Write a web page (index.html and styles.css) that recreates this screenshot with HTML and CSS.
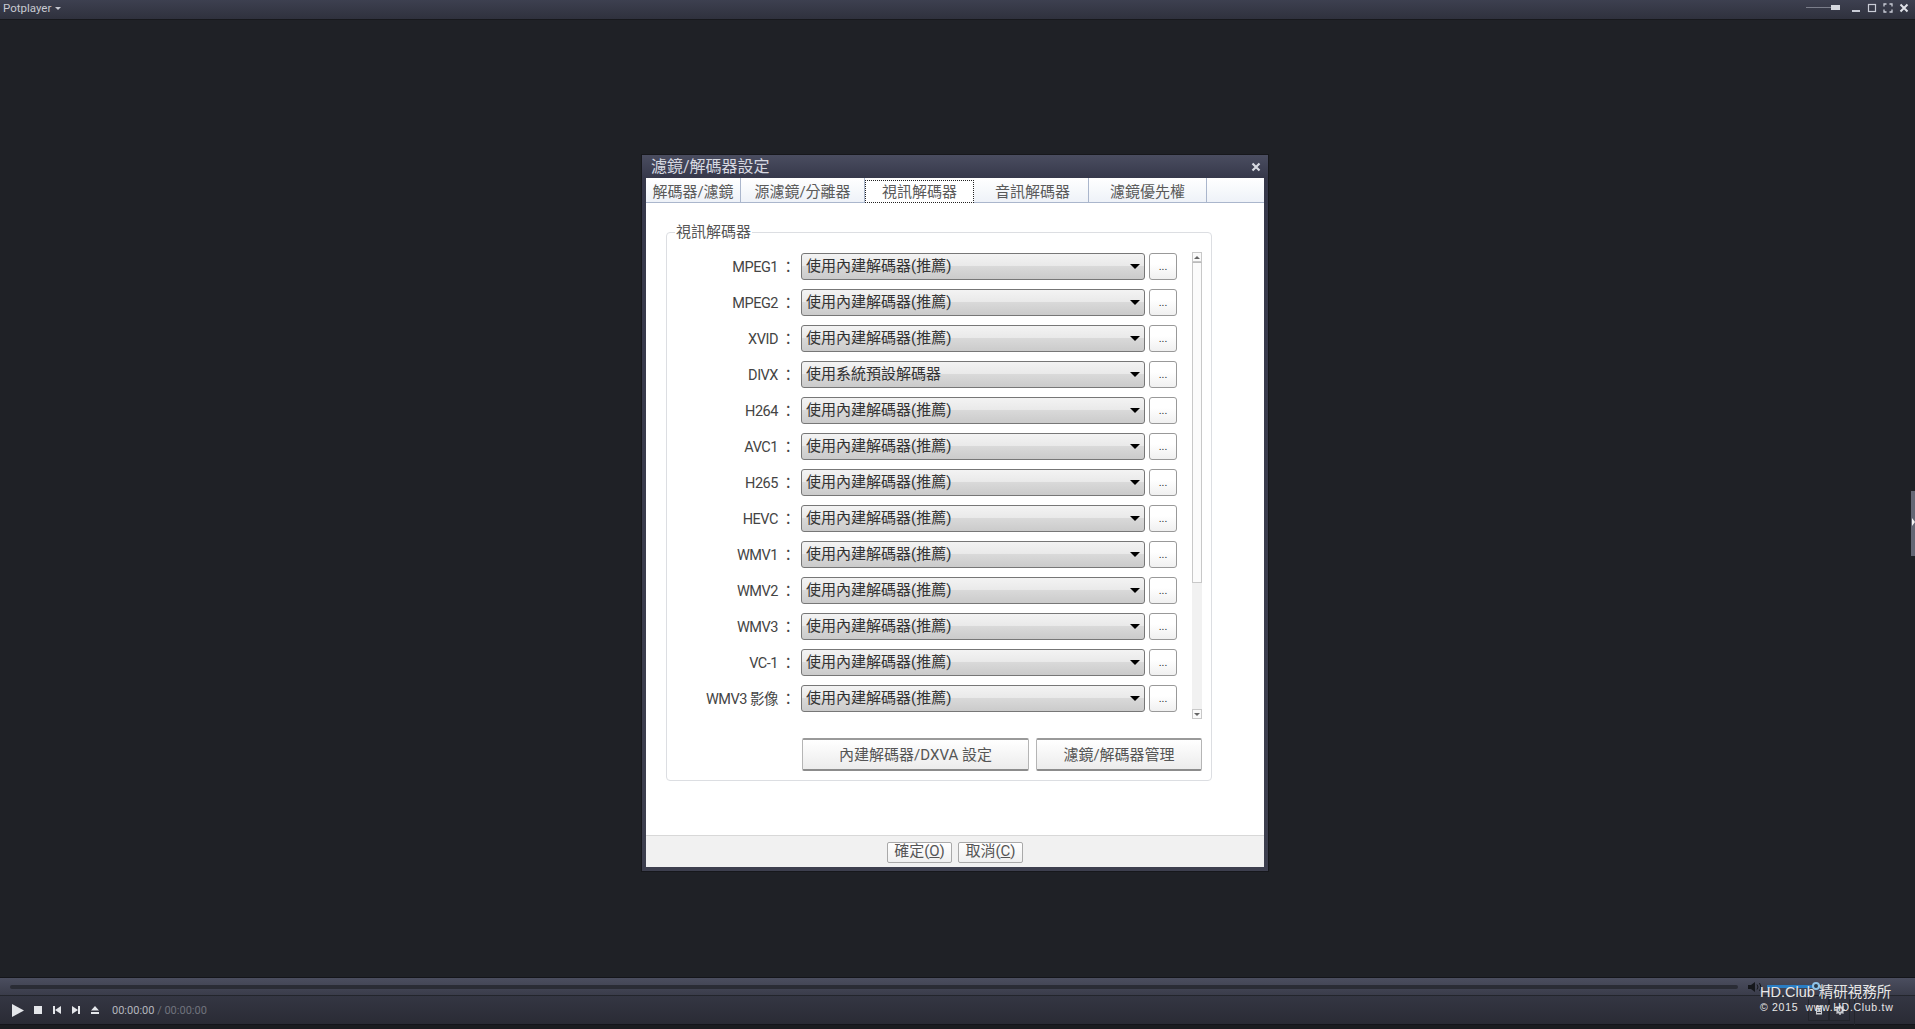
FILE: index.html
```html
<!DOCTYPE html>
<html lang="zh-Hant">
<head>
  <meta charset="UTF-8">
  <title>Potplayer</title>
  <link rel="stylesheet" href="styles.css">
</head>
<body>

<header class="topbar">
  <div class="app-menu">Potplayer <span class="caret"></span></div>
  <div class="win-controls">
    <div class="opacity-slider"><span class="opacity-line"></span><span class="opacity-thumb"></span></div>
    <svg class="win-icon" viewBox="0 0 10 10"><rect x="1" y="7" width="8" height="2" fill="#c9ccd6"/></svg>
    <svg class="win-icon" viewBox="0 0 10 10"><rect x="1.5" y="1.5" width="7" height="7" fill="none" stroke="#c9ccd6" stroke-width="1.2"/></svg>
    <svg class="win-icon" viewBox="0 0 10 10"><path d="M1 3.5V1h2.5M6.500 1H9v2.500M9 6.500V9H6.500M3.500 9H1V6.500" fill="none" stroke="#c9ccd6" stroke-width="1.300"/></svg>
    <svg class="win-icon" viewBox="0 0 10 10"><path d="M1.500 1.500l7 7M8.500 1.500l-7 7" stroke="#dfe1e8" stroke-width="2"/></svg>
  </div>
</header>

<main class="stage">
  <section class="dialog">
    <div class="dialog-title">
      <span>濾鏡/解碼器設定</span>
      <svg class="dialog-close" viewBox="0 0 10 10"><path d="M1.500 1.500l7 7M8.500 1.500l-7 7" stroke="#d8dae2" stroke-width="2.200"/></svg>
    </div>
    <div class="dialog-client">
      <nav class="tabs">
        <div class="tab tab-1">解碼器/濾鏡</div>
        <div class="tab tab-2">源濾鏡/分離器</div>
        <div class="tab tab-3 active">視訊解碼器</div>
        <div class="tab tab-4">音訊解碼器</div>
        <div class="tab tab-5">濾鏡優先權</div>
      </nav>

      <div class="dialog-body">
        <div class="group">
          <div class="group-title">視訊解碼器</div>
          <div class="codec-area">
            <div class="codec-list">
              <div class="codec-row"><label>MPEG1 ：</label><div class="combo">使用內建解碼器(推薦)</div><button class="more">...</button></div>
              <div class="codec-row"><label>MPEG2 ：</label><div class="combo">使用內建解碼器(推薦)</div><button class="more">...</button></div>
              <div class="codec-row"><label>XVID ：</label><div class="combo">使用內建解碼器(推薦)</div><button class="more">...</button></div>
              <div class="codec-row"><label>DIVX ：</label><div class="combo">使用系統預設解碼器</div><button class="more">...</button></div>
              <div class="codec-row"><label>H264 ：</label><div class="combo">使用內建解碼器(推薦)</div><button class="more">...</button></div>
              <div class="codec-row"><label>AVC1 ：</label><div class="combo">使用內建解碼器(推薦)</div><button class="more">...</button></div>
              <div class="codec-row"><label>H265 ：</label><div class="combo">使用內建解碼器(推薦)</div><button class="more">...</button></div>
              <div class="codec-row"><label>HEVC ：</label><div class="combo">使用內建解碼器(推薦)</div><button class="more">...</button></div>
              <div class="codec-row"><label>WMV1 ：</label><div class="combo">使用內建解碼器(推薦)</div><button class="more">...</button></div>
              <div class="codec-row"><label>WMV2 ：</label><div class="combo">使用內建解碼器(推薦)</div><button class="more">...</button></div>
              <div class="codec-row"><label>WMV3 ：</label><div class="combo">使用內建解碼器(推薦)</div><button class="more">...</button></div>
              <div class="codec-row"><label>VC-1 ：</label><div class="combo">使用內建解碼器(推薦)</div><button class="more">...</button></div>
              <div class="codec-row"><label>WMV3 影像 ：</label><div class="combo">使用內建解碼器(推薦)</div><button class="more">...</button></div>
            </div>
            <div class="scrollbar">
              <div class="scroll-btn"><span class="tri-up"></span></div>
              <div class="scroll-thumb"></div>
              <div class="scroll-track"></div>
              <div class="scroll-btn"><span class="tri-down"></span></div>
            </div>
          </div>
          <div class="group-actions">
            <button class="action action-wide">內建解碼器/DXVA 設定</button>
            <button class="action action-narrow">濾鏡/解碼器管理</button>
          </div>
        </div>
      </div>

      <footer class="dialog-footer">
        <button class="foot-btn">確定(<u>O</u>)</button>
        <button class="foot-btn">取消(<u>C</u>)</button>
      </footer>
    </div>
  </section>
  <div class="side-handle"><span class="side-arrow"></span></div>
</main>

<footer class="playbar">
  <div class="seek-row">
    <div class="seek-track"></div>
    <div class="volume">
      <svg class="speaker" viewBox="0 0 16 12"><path d="M1 4h3l4-3v10L4 8H1z" fill="#15171b"/><path d="M10 3.500q2 2.500 0 5M12.500 2q3 4 0 8" fill="none" stroke="#15171b"/></svg>
      <div class="volume-level"><span class="volume-knob"></span></div>
    </div>
  </div>
  <div class="control-row">
    <svg class="ctl ctl-play" viewBox="0 0 12 13"><path d="M0 0l12 6.500L0 13z" fill="#e4e6ea"/></svg>
    <svg class="ctl" viewBox="0 0 8 8"><rect width="8" height="8" fill="#e4e6ea"/></svg>
    <svg class="ctl" viewBox="0 0 8 8"><path d="M0 0h2v8H0zM8 0v8L2 4z" fill="#e4e6ea"/></svg>
    <svg class="ctl" viewBox="0 0 8 8"><path d="M8 0H6v8h2zM0 0v8l6-4z" fill="#e4e6ea"/></svg>
    <svg class="ctl" viewBox="0 0 8 8"><path d="M4 0l4 4.500H0zM0 6h8v2H0z" fill="#e4e6ea"/></svg>
    <div class="time"><span class="time-now">00:00:00</span> / 00:00:00</div>
    <div class="side-tools">
      <div class="tool-btn">
        <svg viewBox="0 0 10 10"><path d="M1.500 0h7v10h-7zM3 2.500h4M3 5h4M3 7.500h4" fill="#c7c9cf" stroke="#33353f" stroke-width="1"/></svg>
      </div>
      <div class="tool-btn">
        <svg viewBox="0 0 10 10"><circle cx="5" cy="5" r="2.800" fill="none" stroke="#c7c9cf" stroke-width="2"/><path d="M5 0v2M5 8v2M0 5h2M8 5h2M1.500 1.500l1.300 1.300M7.200 7.200l1.300 1.300M8.500 1.500L7.200 2.800M2.800 7.200L1.500 8.500" stroke="#c7c9cf" stroke-width="1.400"/></svg>
      </div>
    </div>
    <div class="tv-panel"></div>
  </div>
  <div class="bottom-edge"></div>
</footer>

<div class="watermark">
  <div class="wm-line1">HD.Club 精研視務所</div>
  <div class="wm-line2">© 2015&nbsp; www.HD.Club.tw</div>
</div>

</body>
</html>
```

FILE: styles.css
```css
html, body {
  margin: 0;
  height: 100%;
}

body {
  width: 1915px;
  height: 1029px;
  background-color: #1f2126;
  display: flex;
  flex-direction: column;
  overflow: hidden;
  position: relative;
  font-family: Roboto, "Noto Sans CJK TC", sans-serif;
}

button {
  font-family: inherit;
  padding: 0;
  cursor: default;
}

/* top bar */
.topbar {
  height: 19px;
  background: linear-gradient(#3d4050, #2f313d);
  border-bottom: 1px solid #17181c;
  display: flex;
  justify-content: space-between;
  align-items: center;
  flex: none;
}

.app-menu {
  margin: -4px 0 0 3px;
  color: #c8cad2;
  font-size: 11.500px;
  display: flex;
  align-items: center;
  gap: 4px;
}

.caret {
  border-left: 3px solid transparent;
  border-right: 3px solid transparent;
  border-top: 3px solid #c8cad2;
  margin-top: 2px;
}

.win-controls {
  display: flex;
  align-items: center;
  gap: 6px;
  margin: -4px 6px 0 0;
}

.opacity-slider {
  display: flex;
  align-items: center;
  margin-right: 5px;
}

.opacity-line {
  width: 25px;
  height: 1px;
  background: #7b7e8b;
}

.opacity-thumb {
  width: 9px;
  height: 5px;
  background: #d5d7de;
}

.win-icon {
  width: 10px;
  height: 10px;
}

/* middle */
.stage {
  flex: 1;
  padding: 135px 0 0 642px;
  position: relative;
}

.dialog {
  width: 626px;
  height: 716px;
  box-sizing: border-box;
  padding: 0 4px 4px;
  background: linear-gradient(#4a4d60 0, #36384a 23px, #3d3f4e 100%);
  box-shadow: 0 0 0 1px #17181c;
  display: flex;
  flex-direction: column;
}

.dialog-title {
  height: 23px;
  flex: none;
  display: flex;
  justify-content: space-between;
  align-items: center;
  color: #d6d8e0;
  font-size: 16px;
  line-height: 20px;
  padding: 0 3px 0 5px;
  box-sizing: border-box;
}

.dialog-close {
  width: 10px;
  height: 10px;
}

.dialog-client {
  flex: 1;
  background: #fff;
  display: flex;
  flex-direction: column;
}

.tabs {
  height: 25px;
  box-sizing: border-box;
  flex: none;
  display: flex;
  background: linear-gradient(#fff, #eef2f8);
  border-bottom: 1px solid #aab6cc;
}

.tab {
  box-sizing: border-box;
  border-right: 1px solid #aab6cc;
  color: #5a5a5a;
  font-size: 15px;
  line-height: 28px;
  text-align: center;
}

.tab-1 { width: 95px; }
.tab-2 { width: 124px; }
.tab-4 { width: 112px; }
.tab-5 { width: 118px; }

.tab.active {
  background: #fff;
  border: 1px dotted #222;
  margin: 2px 3px 0 0;
  width: 109px;
  height: 23px;
  line-height: 23px;
}

.dialog-body {
  flex: 1;
  padding: 29px 0 0 20px;
}

.group {
  width: 546px;
  height: 549px;
  box-sizing: border-box;
  border: 1px solid #dcdee2;
  border-radius: 4px;
}

.group-title {
  width: fit-content;
  margin: -12px 0 0 8px;
  padding: 0 1px;
  background: #fff;
  color: #555;
  font-size: 15px;
  line-height: 22px;
}

.codec-area {
  display: flex;
  align-items: flex-start;
  margin-top: 10px;
}

.codec-list {
  display: flex;
  flex-direction: column;
  gap: 9px;
}

.codec-row {
  display: grid;
  grid-template-columns: 130px 344px 28px;
  column-gap: 4px;
  height: 27px;
  align-items: center;
}

.codec-row label {
  margin-right: 2px;
  color: #444;
  font-size: 14.500px;
  letter-spacing: -0.500px;
  text-align: right;
  white-space: nowrap;
  margin-top: -2px;
}

.combo {
  height: 27px;
  box-sizing: border-box;
  border: 1px solid #777;
  border-radius: 3px;
  background: linear-gradient(#f3f3f3 0, #e9e9e9 48%, #d9d9d9 50%, #cbcbcb 100%);
  color: #333;
  font-size: 15px;
  line-height: 24px;
  padding-left: 4px;
  position: relative;
}

.combo::after {
  content: "";
  position: absolute;
  right: 4px;
  top: 10px;
  border-left: 5px solid transparent;
  border-right: 5px solid transparent;
  border-top: 5px solid #000;
}

.more {
  height: 27px;
  box-sizing: border-box;
  border: 1px solid #999;
  border-radius: 3px;
  background: linear-gradient(#fff 40%, #f0f0f0);
  color: #333;
  font-size: 11px;
  line-height: 22px;
}

.scrollbar {
  width: 10px;
  height: 467px;
  margin: -1px 0 0 15px;
  background: #f1f1f1;
  display: flex;
  flex-direction: column;
}

.scroll-btn {
  height: 10px;
  flex: none;
  box-sizing: border-box;
  border: 1px solid #c8c8c8;
  background: #fafafa;
  display: flex;
  align-items: center;
  justify-content: center;
}

.tri-up, .tri-down {
  border-left: 3px solid transparent;
  border-right: 3px solid transparent;
}

.tri-up { border-bottom: 3px solid #666; }
.tri-down { border-top: 3px solid #666; }

.scroll-thumb {
  height: 321px;
  flex: none;
  box-sizing: border-box;
  border: 1px solid #c8c8c8;
  border-top-color: #bbb;
  background: #fbfbfb;
}

.scroll-track {
  flex: 1;
}

.group-actions {
  display: flex;
  gap: 7px;
  margin: 19px 0 0 135px;
}

.action {
  height: 33px;
  box-sizing: border-box;
  border: 1px solid #b5b5b5;
  border-top: 2px solid #9a9a9a;
  border-bottom: 2px solid #8c8c8c;
  border-radius: 2px;
  background: linear-gradient(#fff, #ececec);
  color: #555;
  font-size: 15px;
  padding-bottom: 3px;
}

.action-wide { width: 227px; }
.action-narrow { width: 166px; }

.dialog-footer {
  height: 32px;
  box-sizing: border-box;
  flex: none;
  background: #f1f1f1;
  border-top: 1px solid #d8d8d8;
  display: flex;
  justify-content: center;
  align-items: flex-start;
  gap: 6px;
  padding-top: 6px;
}

.foot-btn {
  width: 65px;
  height: 21px;
  box-sizing: border-box;
  border: 1px solid #a9a9a9;
  border-radius: 2px;
  background: linear-gradient(#fff, #f0f0f0);
  color: #555;
  font-size: 15px;
  line-height: 17px;
  padding-bottom: 2px;
}

.side-handle {
  position: absolute;
  right: 0;
  top: 471px;
  width: 4px;
  height: 65px;
  background: #646775;
}

.side-arrow {
  position: absolute;
  left: 1px;
  top: 27px;
  border-top: 4px solid transparent;
  border-bottom: 4px solid transparent;
  border-left: 3px solid #f2f2f2;
}

/* bottom bar */
.playbar {
  height: 52px;
  flex: none;
  background: #191a1e;
  border-top: 1px solid #14151a;
  box-sizing: border-box;
  display: flex;
  flex-direction: column;
}

.seek-row {
  height: 18px;
  flex: none;
  box-sizing: border-box;
  background: linear-gradient(#4b4e5f, #3a3c4a);
  border-bottom: 1px solid #23252c;
  display: flex;
  align-items: center;
  padding-left: 10px;
}

.seek-track {
  width: 1728px;
  height: 4px;
  border-radius: 2px;
  background: #2a2c35;
}

.volume {
  display: flex;
  align-items: center;
  margin-left: 9px;
  gap: 4px;
}

.speaker {
  width: 16px;
  height: 12px;
}

.volume-level {
  width: 48px;
  height: 3px;
  background: #2a7dc4;
  position: relative;
}

.volume-knob {
  position: absolute;
  right: -5px;
  top: -3px;
  width: 4px;
  height: 4px;
  border: 2px solid #8fc3e8;
  border-radius: 50%;
  background: #2a3a4a;
}

.control-row {
  height: 29px;
  flex: none;
  box-sizing: border-box;
  background: linear-gradient(#343643, #2a2b35);
  border-bottom: 1px solid #14151a;
  display: flex;
  align-items: center;
  padding-left: 12px;
}

.ctl {
  width: 8px;
  height: 8px;
  margin-right: 11px;
  flex: none;
}

.ctl-play {
  width: 12px;
  height: 13px;
  margin-right: 10px;
}

.time {
  margin-left: 2px;
  color: #70737d;
  font-size: 11px;
  white-space: nowrap;
}

.time-now {
  color: #b5b7bd;
}

.side-tools {
  margin-left: auto;
  display: flex;
}

.tool-btn {
  width: 21px;
  height: 22px;
  box-sizing: border-box;
  border: 1px solid #23252c;
  border-top: none;
  display: flex;
  align-items: center;
  justify-content: center;
}

.tool-btn svg {
  width: 10px;
  height: 10px;
}

.tv-panel {
  width: 55px;
  height: 29px;
  margin: 0 6px 0 4px;
  box-sizing: border-box;
  border-left: 1px solid #23252c;
}

.bottom-edge {
  flex: 1;
  background: #1b1c20;
}

/* watermark lies over the play bar */
.watermark {
  position: absolute;
  left: 1760px;
  top: 983px;
  color: #e8e8e8;
  font-family: "Liberation Sans", "Noto Sans CJK TC", sans-serif;
  white-space: nowrap;
}

.wm-line1 {
  font-size: 14.500px;
  line-height: 18px;
}

.wm-line2 {
  font-size: 10.500px;
  line-height: 13px;
  letter-spacing: 0.700px;
}
```
